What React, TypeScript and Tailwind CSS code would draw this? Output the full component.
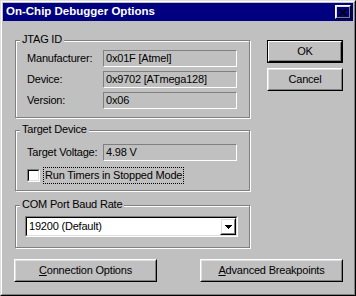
import React from 'react';

const FONT = "font-['Liberation_Sans',Arial,sans-serif]";

function Raised({ children, className = '' }: { children?: React.ReactNode; className?: string }) {
  return (
    <div className={`border border-t-white border-l-white border-r-black border-b-black ${className}`}>
      <div className="flex h-full w-full items-center justify-center border border-t-[#dfdfdf] border-l-[#dfdfdf] border-r-[#808080] border-b-[#808080]">
        {children}
      </div>
    </div>
  );
}

function DefaultButton({ children }: { children: React.ReactNode }) {
  return (
    <div className="h-[23px] w-[76px] border border-black">
      <div className="h-full w-full border border-t-white border-l-white border-r-black border-b-black">
        <div className="flex h-full w-full items-center justify-center border border-t-[#c0c0c0] border-l-[#c0c0c0] border-r-[#808080] border-b-[#808080]">
          {children}
        </div>
      </div>
    </div>
  );
}

function Group({ title, className = '', children }: { title: string; className?: string; children: React.ReactNode }) {
  return (
    <div className={`relative w-[235px] border border-[#808080] shadow-[inset_1px_1px_0_white,1px_1px_0_white] ${className}`}>
      <span className="absolute -top-[8px] left-[4px] bg-[#c0c0c0] px-[2px] leading-[13px]">{title}</span>
      {children}
    </div>
  );
}

function Field({ label, value }: { label: string; value: string }) {
  return (
    <div className="flex h-[17px] items-center">
      <span className="w-[76px] shrink-0">{label}</span>
      <div className="flex h-[17px] w-[134px] items-center border border-t-[#808080] border-l-[#808080] border-r-white border-b-white pl-[2px]">
        {value}
      </div>
    </div>
  );
}

function CloseGlyph() {
  const rows = ['##....##', '.##..##.', '..####..', '...##...', '..####..', '.##..##.', '##....##'];
  return (
    <svg width="8" height="7" viewBox="0 0 8 7" shapeRendering="crispEdges">
      {rows.map((r, y) =>
        r.split('').map((c, x) => (c === '#' ? <rect key={`${x}-${y}`} x={x} y={y} width="1" height="1" fill="black" /> : null))
      )}
    </svg>
  );
}

function ArrowDown() {
  return (
    <svg width="7" height="4" viewBox="0 0 7 4" shapeRendering="crispEdges">
      <rect x="0" y="0" width="7" height="1" fill="black" />
      <rect x="1" y="1" width="5" height="1" fill="black" />
      <rect x="2" y="2" width="3" height="1" fill="black" />
      <rect x="3" y="3" width="1" height="1" fill="black" />
    </svg>
  );
}

export default function App() {
  return (
    <div className={`${FONT} h-[296px] w-[356px] border border-t-[#dfdfdf] border-l-[#dfdfdf] border-r-black border-b-black bg-[#c0c0c0] text-[11px] tracking-[-0.2px] text-black`}>
      <div className="h-full w-full border border-t-white border-l-white border-r-[#808080] border-b-[#808080] p-px">
        {/* Title bar */}
        <div className="flex h-[18px] items-center justify-between bg-[#000080] pl-[3px] pr-[2px]">
          <span className="text-[11.5px] font-bold tracking-normal text-white">On-Chip Debugger Options</span>
          <Raised className="h-[14px] w-[16px]">
            <CloseGlyph />
          </Raised>
        </div>

        {/* Body */}
        <div className="flex pl-[12px] pt-[19px]">
          <div className="flex flex-col">
            <Group title="JTAG ID">
              <div className="flex flex-col gap-[4px] pb-[8px] pl-[11px] pt-[9px]">
                <Field label="Manufacturer:" value="0x01F [Atmel]" />
                <Field label="Device:" value="0x9702 [ATmega128]" />
                <Field label="Version:" value="0x06" />
              </div>
            </Group>

            <Group title="Target Device" className="mt-[12px]">
              <div className="flex flex-col gap-[6px] pb-[6px] pl-[11px] pt-[13px]">
                <Field label="Target Voltage:" value="4.98 V" />
                <div className="flex h-[17px] items-center">
                  <div className="h-[13px] w-[13px] border border-t-[#808080] border-l-[#808080] border-r-white border-b-white">
                    <div className="h-full w-full border border-t-black border-l-black border-r-[#dfdfdf] border-b-[#dfdfdf] bg-white" />
                  </div>
                  <span className="ml-[3px] flex h-[17px] items-center border border-dotted border-black px-px">
                    Run Timers in Stopped Mode
                  </span>
                </div>
              </div>
            </Group>

            <Group title="COM Port Baud Rate" className="mt-[14px]">
              <div className="pb-[10px] pl-[9px] pt-[10px]">
                <div className="h-[21px] w-[213px] border border-t-[#808080] border-l-[#808080] border-r-white border-b-white">
                  <div className="flex h-full w-full border border-t-black border-l-black border-r-[#dfdfdf] border-b-[#dfdfdf] bg-white">
                    <span className="flex flex-1 items-center pl-[2px]">19200 (Default)</span>
                    <Raised className="h-full w-[16px]">
                      <ArrowDown />
                    </Raised>
                  </div>
                </div>
              </div>
            </Group>
          </div>

          <div className="ml-[17px] flex flex-col gap-[5px]">
            <DefaultButton>OK</DefaultButton>
            <Raised className="h-[23px] w-[76px]">Cancel</Raised>
          </div>
        </div>

        {/* Bottom buttons */}
        <div className="mt-[11px] flex justify-between pl-[11px] pr-[10px]">
          <Raised className="h-[23px] w-[143px]">
            <span>
              <u className="underline-offset-1">C</u>onnection Options
            </span>
          </Raised>
          <Raised className="h-[23px] w-[143px]">
            <span>
              <u className="underline-offset-1">A</u>dvanced Breakpoints
            </span>
          </Raised>
        </div>
      </div>
    </div>
  );
}
